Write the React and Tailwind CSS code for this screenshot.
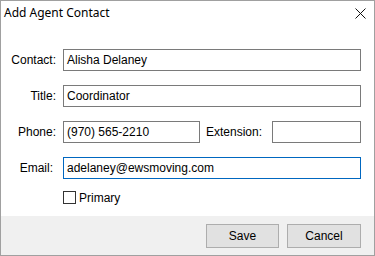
import React from "react";

const font = { fontFamily: '"Liberation Sans", Arial, sans-serif' };

function Field({ value, className = "", focused }) {
  return (
    <div
      className={`h-[22px] flex items-center px-[3px] text-[12px] text-black bg-white border ${
        focused ? "border-[#0067c0]" : "border-[#7a7a7a]"
      } ${className}`}
    >
      {value}
    </div>
  );
}

function Row({ label, labelClass = "pr-[1px]", children }) {
  return (
    <div className="flex items-center h-[22px]">
      <span className={`w-[56px] text-right text-[12px] text-black ${labelClass}`}>{label}</span>
      <div className="ml-[6px] flex items-center flex-1">{children}</div>
    </div>
  );
}

export default function App() {
  return (
    <div
      className="w-[375px] h-[256px] border border-[#a0a0a0] bg-white flex flex-col"
      style={font}
    >
      <div className="h-[24px] flex items-center justify-between pl-[3px] pr-[8px]">
        <span className="text-[12px] text-black" style={{ fontFamily: '"Noto Sans", sans-serif' }}>
          Add Agent Contact
        </span>
        <svg width="11" height="11" viewBox="0 0 11 11" className="mt-[1px]">
          <path d="M0.5 0.5 L10.5 10.5 M10.5 0.5 L0.5 10.5" stroke="#111" strokeWidth="1" />
        </svg>
      </div>

      <div className="flex flex-col gap-[14px] pt-[24px] pr-[13px]">
        <Row label="Contact:">
          <Field value="Alisha Delaney" className="flex-1" />
        </Row>
        <Row label="Title:">
          <Field value="Coordinator" className="flex-1" />
        </Row>
        <Row label="Phone:">
          <Field value="(970) 565-2210" className="w-[137px]" />
          <span className="ml-[6px] w-[66px] text-[12px] text-black">Extension:</span>
          <Field value="" className="flex-1" />
        </Row>
        <Row label="Email:" labelClass="pr-[4px]">
          <Field value="adelaney@ewsmoving.com" className="flex-1" focused />
        </Row>
      </div>

      <div className="flex items-center mt-[12px] pl-[62px] h-[13px]">
        <div className="w-[13px] h-[13px] border border-[#333] bg-white" />
        <span className="ml-[3px] text-[12px] text-black">Primary</span>
      </div>

      <div className="mt-auto h-[39px] bg-[#f0f0f0] flex justify-end items-start pt-[8px] pr-[13px] gap-[8px]">
        <button className="w-[73px] h-[24px] bg-[#e1e1e1] border border-[#adadad] text-[12px] text-black">
          Save
        </button>
        <button className="w-[74px] h-[24px] bg-[#e1e1e1] border border-[#adadad] text-[12px] text-black">
          Cancel
        </button>
      </div>
    </div>
  );
}
